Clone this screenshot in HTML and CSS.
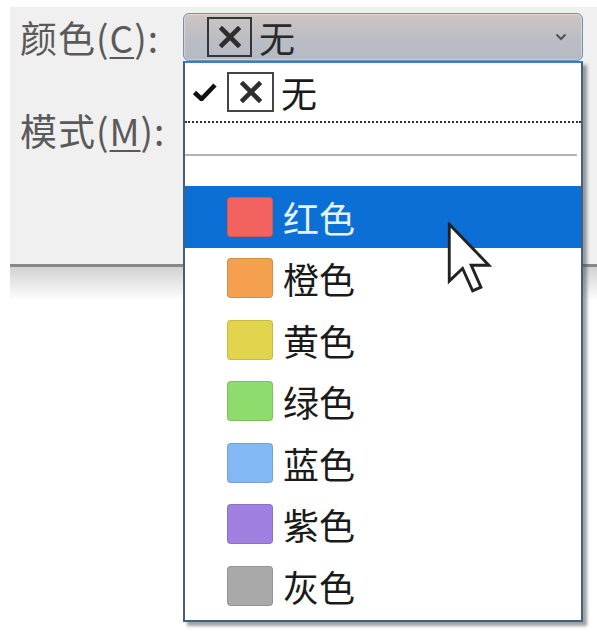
FILE: index.html
```html
<!DOCTYPE html>
<html lang="zh-CN">
<head>
<meta charset="utf-8">
<link rel="stylesheet" href="styles.css">
</head>
<body>
<div class="dialog">
  <div class="label">颜色(<u>C</u>):</div>
  <div class="combo">
    <span class="xbox"><svg viewBox="0 0 22 22" width="22" height="22"><path d="M3 3 L19 19 M19 3 L3 19" stroke="#2e2e2e" stroke-width="4.6" stroke-linecap="square"/></svg></span>
    <span class="combo-text">无</span>
    <svg class="chev" viewBox="0 0 12 8" width="12" height="8"><path d="M1.5 1.5 L6 6 L10.5 1.5" fill="none" stroke="#555" stroke-width="2.2"/></svg>
  </div>
  <div class="label">模式(<u>M</u>):</div>
  <div class="combo combo-hidden"></div>
</div>
<div class="dialog-shadow"></div>

<div class="list">
  <div class="row-none">
    <svg class="check" viewBox="0 0 24 18" width="25" height="18"><path d="M2 9.5 L9 16 L22.5 2" fill="none" stroke="#111" stroke-width="4.6"/></svg>
    <span class="xbox xbox-list"><svg viewBox="0 0 22 22" width="22" height="22"><path d="M3 3 L19 19 M19 3 L3 19" stroke="#2e2e2e" stroke-width="4.6" stroke-linecap="square"/></svg></span>
    <span class="item-text">无</span>
  </div>
  <div class="sep"></div>
  <div class="item active"><span class="sw sw-red"></span><span class="item-text">红色</span></div>
  <div class="item"><span class="sw sw-orange"></span><span class="item-text">橙色</span></div>
  <div class="item"><span class="sw sw-yellow"></span><span class="item-text">黄色</span></div>
  <div class="item"><span class="sw sw-green"></span><span class="item-text">绿色</span></div>
  <div class="item"><span class="sw sw-blue"></span><span class="item-text">蓝色</span></div>
  <div class="item"><span class="sw sw-purple"></span><span class="item-text">紫色</span></div>
  <div class="item"><span class="sw sw-gray"></span><span class="item-text">灰色</span></div>
</div>

<svg class="cursor" viewBox="0 0 13 20" width="47" height="72"><path d="M0.6 0.6 L0.6 16.4 L4.3 12.9 L7.1 19.1 L9.4 18.1 L6.7 12 L11.6 12 Z" fill="#fff" stroke="#222" stroke-width="0.8" stroke-linejoin="miter"/></svg>
</body>
</html>
```

FILE: styles.css
```css
html, body {
  margin: 0;
  padding: 0;
  background: #ffffff;
}
body {
  position: relative;
  width: 597px;
  height: 633px;
  overflow: hidden;
  font-family: "Noto Sans CJK SC", "Noto Sans", sans-serif;
}
.dialog {
  margin: 7px 0 0 10px;
  height: 260px;
  box-sizing: border-box;
  padding: 6px 0 0 10px;
  background: #f0f0f0;
  border-bottom: 3px solid #888888;
  display: grid;
  grid-template-columns: 163px 400px;
  grid-auto-rows: 48px;
  row-gap: 45px;
  align-items: center;
}
.dialog-shadow {
  margin-left: 10px;
  height: 34px;
  background: linear-gradient(#d2d2d2, #ffffff);
}
.label {
  font-size: 37px;
  color: #5a5a5a;
  letter-spacing: 1px;
  line-height: 48px;
  white-space: nowrap;
}
.label u {
  text-decoration-thickness: 2px;
  text-underline-offset: 4px;
}
.combo {
  height: 48px;
  box-sizing: border-box;
  border: 1px solid #7890ab;
  border-radius: 6px;
  background: linear-gradient(#cfc5c3, #bbbdc4 55%, #b3bac5);
  box-shadow: inset 0 0 0 1px rgba(255,255,255,0.35);
  display: flex;
  align-items: center;
  padding-left: 23px;
  padding-right: 15px;
}
.combo-hidden {
  visibility: hidden;
}
.xbox {
  width: 45px;
  height: 40px;
  box-sizing: border-box;
  border: 2px solid #353535;
  display: flex;
  align-items: center;
  justify-content: center;
  flex: none;
}
.combo-text {
  margin-left: 7px;
  font-size: 36px;
  color: #2a2a2a;
  line-height: 40px;
}
.chev {
  margin-left: auto;
}
.list {
  position: absolute;
  left: 183px;
  top: 61px;
  width: 400px;
  height: 561px;
  box-sizing: border-box;
  background: #ffffff;
  border: 2px solid #44607c;
  border-top-color: #3a7ed2;
  box-shadow: 4px 4px 3px rgba(60,70,80,0.5);
  display: flex;
  flex-direction: column;
}
.row-none {
  height: 58px;
  display: flex;
  align-items: center;
  padding-left: 7px;
  border-bottom: 2px dotted #333;
  flex: none;
}
.check {
  margin-right: 10px;
  flex: none;
}
.xbox-list {
  width: 47px;
  height: 40px;
  border-color: #454545;
  background: #fff;
}
.row-none .item-text {
  margin-left: 7px;
}
.sep {
  height: 2px;
  background: #b4b4b4;
  margin: 31px 4px 30px 0;
  flex: none;
}
.item {
  height: 61.5px;
  display: flex;
  align-items: center;
  padding-left: 42px;
  flex: none;
}
.item.active {
  background: #0c6fd6;
}
.item.active .item-text {
  color: #e6f3ff;
}
.sw {
  width: 46px;
  height: 40px;
  box-sizing: border-box;
  border-radius: 4px;
  border: 1px solid rgba(0,0,0,0.12);
  margin-right: 10px;
  flex: none;
}
.sw-red { background: #f2635f; }
.sw-orange { background: #f5a04e; }
.sw-yellow { background: #e2d44c; }
.sw-green { background: #8edc6e; }
.sw-blue { background: #82b8f4; }
.sw-purple { background: #9f80e0; }
.sw-gray { background: #a9a9a9; }
.item-text {
  font-size: 36px;
  color: #1a1a1a;
  line-height: 44px;
  white-space: nowrap;
}
.cursor {
  position: absolute;
  left: 447px;
  top: 222px;
}
```
